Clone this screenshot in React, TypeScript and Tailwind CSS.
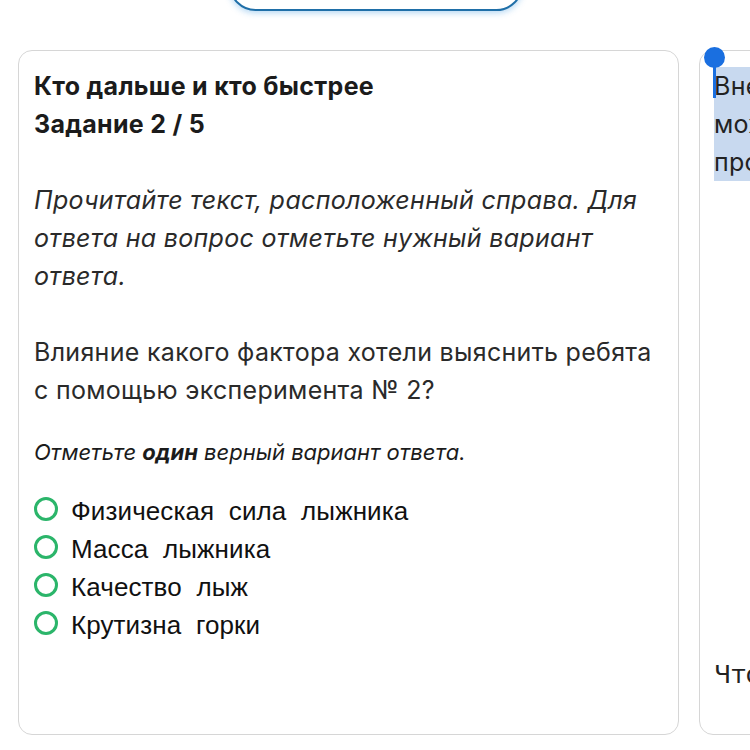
import React from "react";

const options = [
  "Физическая\u00a0\u00a0сила\u00a0\u00a0лыжника",
  "Масса\u00a0\u00a0лыжника",
  "Качество\u00a0\u00a0лыж",
  "Крутизна\u00a0\u00a0горки",
];

export default function App() {
  return (
    <div className="w-[750px] h-[750px] overflow-hidden bg-white flex flex-col" style={{ fontFamily: "Inter, 'Noto Sans', sans-serif" }}>
      <div className="flex justify-center pl-[2px]">
        <div className="-mt-[42px] w-[294px] h-[53px] rounded-full border-2 border-[#1f6fa8] bg-white shadow-[0_2px_6px_rgba(40,140,220,0.35)]" />
      </div>
      <div className="flex gap-[20px] pl-[18px] mt-[39px]">
        <div className="shrink-0 w-[661px] h-[685px] rounded-[14px] border border-[#d6d6d6] pt-[16px] pl-[15px] pr-[12px] text-[#1b1b1b]">
          <div className="text-[25px] leading-[38px] font-bold tracking-[0.3px]">
            <div>Кто дальше и кто быстрее</div>
            <div>Задание 2 / 5</div>
          </div>
          <p className="mt-[38px] text-[25px] leading-[38px] italic tracking-[0.3px] text-[#2a2a2a]">
            Прочитайте текст, расположенный справа. Для ответа на вопрос отметьте нужный вариант ответа.
          </p>
          <p className="mt-[38px] text-[25px] leading-[38px] tracking-[0.3px] text-[#2a2a2a]">
            Влияние какого фактора хотели выяснить ребята с помощью эксперимента № 2?
          </p>
          <p className="mt-[26px] text-[22px] leading-[34px] italic text-[#1b1b1b]">
            Отметьте <b>один</b> верный вариант ответа.
          </p>
          <div className="mt-[23px] flex flex-col" style={{ fontFamily: "'Liberation Sans', Arial, sans-serif" }}>
            {options.map((o) => (
              <div key={o} className="flex items-center h-[38px]">
                <span className="w-[24px] h-[24px] rounded-full border-[3px] border-[#2bb56a] shrink-0 -mt-[4px]" />
                <span className="ml-[13px] text-[26px] tracking-[0.1px] text-[#111]">{o}</span>
              </div>
            ))}
          </div>
        </div>
        <div className="relative shrink-0 w-[400px] h-[685px] rounded-[14px] border border-[#d6d6d6] pt-[16px] pl-[14px] flex flex-col text-[#222]">
          <div className="bg-[#c8d9ef] text-[25px] leading-[38px] tracking-[0.3px] whitespace-nowrap overflow-hidden">
            <div>Внеурочная работа</div>
            <div>можно</div>
            <div>провести</div>
          </div>
          <div className="mt-auto mb-[40px] text-[25px] leading-[38px]" style={{ fontFamily: "'DejaVu Sans', sans-serif" }}>Что</div>
          <div className="absolute left-[4px] top-[-4px] flex flex-col items-center">
            <div className="w-[21px] h-[21px] rounded-full bg-[#1a6fe0]" />
            <div className="w-[3px] h-[32px] bg-[#1a6fe0] -mt-[2px]" />
          </div>
        </div>
      </div>
    </div>
  );
}
